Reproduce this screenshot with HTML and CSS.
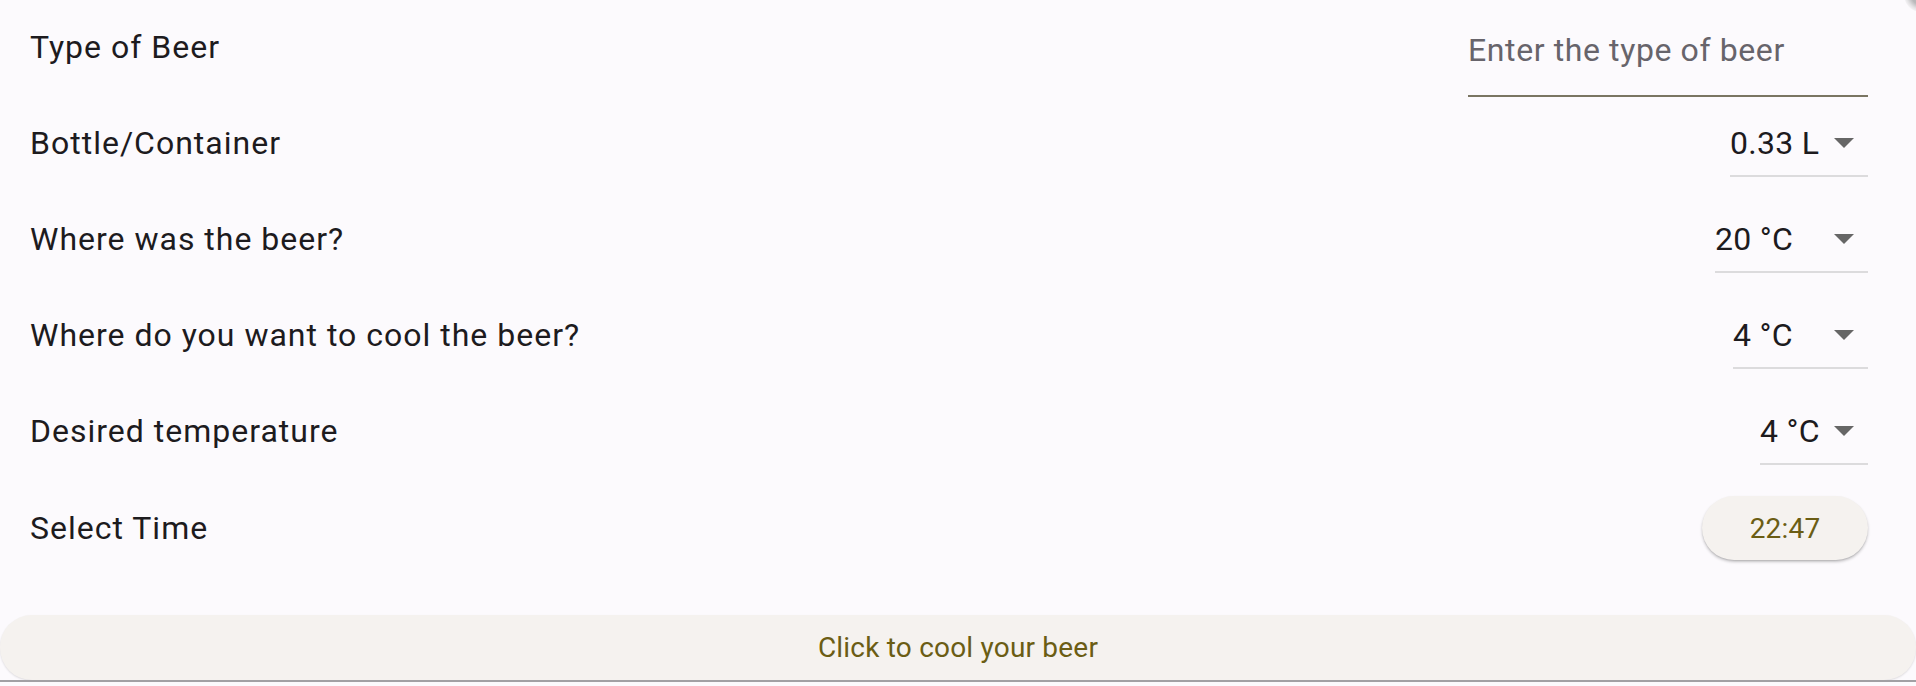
FILE: index.html
```html
<!DOCTYPE html>
<html lang="en">
<head>
<meta charset="utf-8">
<title>Cool your beer</title>
<link rel="stylesheet" href="styles.css">
</head>
<body>
<main class="page">
  <div class="row row-first">
    <span class="label label-first">Type of Beer</span>
    <div class="field"><span class="placeholder">Enter the type of beer</span></div>
  </div>

  <div class="row row-dd row-dd-first">
    <span class="label">Bottle/Container</span>
    <div class="dd dd-bottle">
      <span class="dd-value">0.33 L</span>
      <span class="dd-icon"><svg width="20" height="10" viewBox="0 0 20 10"><path d="M0 0H20L10 10Z" fill="#666666"/></svg></span>
    </div>
  </div>

  <div class="row row-dd">
    <span class="label">Where was the beer?</span>
    <div class="dd dd-where">
      <span class="dd-value">20 °C</span>
      <span class="dd-icon"><svg width="20" height="10" viewBox="0 0 20 10"><path d="M0 0H20L10 10Z" fill="#666666"/></svg></span>
    </div>
  </div>

  <div class="row row-dd">
    <span class="label">Where do you want to cool the beer?</span>
    <div class="dd dd-cool">
      <span class="dd-value">4 °C</span>
      <span class="dd-icon"><svg width="20" height="10" viewBox="0 0 20 10"><path d="M0 0H20L10 10Z" fill="#666666"/></svg></span>
    </div>
  </div>

  <div class="row row-dd">
    <span class="label">Desired temperature</span>
    <div class="dd dd-temp">
      <span class="dd-value">4 °C</span>
      <span class="dd-icon"><svg width="20" height="10" viewBox="0 0 20 10"><path d="M0 0H20L10 10Z" fill="#666666"/></svg></span>
    </div>
  </div>

  <div class="row row-time">
    <span class="label">Select Time</span>
    <button class="time-btn" type="button">22:47</button>
  </div>

  <button class="cta" type="button">Click to cool your beer</button>
  <div class="bottom-line"></div>
</main>
<div class="corner-shadow"></div>
</body>
</html>
```

FILE: styles.css
```css
html, body {
  margin: 0;
  padding: 0;
}

body {
  background: #fcfafd;
  font-family: Roboto, "Noto Sans", "Liberation Sans", sans-serif;
  color: #1d1b1e;
  width: 1916px;
  height: 686px;
  overflow: hidden;
  position: relative;
}

.page {
  display: flex;
  flex-direction: column;
}

.row {
  display: flex;
  justify-content: space-between;
  box-sizing: border-box;
  padding-left: 30px;
  padding-right: 48px;
}

.label {
  font-size: 32px;
  line-height: 40px;
  letter-spacing: 1px;
  color: #1d1b1e;
  white-space: nowrap;
}

.row-first {
  height: 97px;
  align-items: center;
}

.label-first {
  margin-bottom: 3px;
}

.field {
  width: 400px;
  height: 97px;
  box-sizing: border-box;
  padding-top: 30px;
  border-bottom: 2px solid #7a7562;
}

.placeholder {
  display: block;
  font-size: 32px;
  line-height: 40px;
  letter-spacing: 0.6px;
  color: #67646b;
}

.row-dd {
  height: 96px;
  padding-top: 30px;
  align-items: baseline;
}

.row-dd-first {
  height: 80px;
  padding-top: 14px;
}

.dd {
  display: flex;
  align-items: center;
  box-sizing: border-box;
  height: 66px;
  padding: 12px 0;
  border-bottom: 2px solid #dcdbdd;
}

.dd-value {
  flex: 1;
  font-size: 32px;
  line-height: 40px;
  letter-spacing: 0.3px;
  color: #1d1b1e;
  white-space: nowrap;
}

.dd-icon {
  width: 48px;
  height: 40px;
  display: flex;
  align-items: center;
  justify-content: center;
}

.dd-icon svg {
  display: block;
}

.dd-bottle { width: 138px; }
.dd-where { width: 153px; }
.dd-cool { width: 135px; }
.dd-temp { width: 108px; }

.row-time {
  align-items: center;
  padding-top: 31px;
  padding-bottom: 55px;
}

.time-btn {
  width: 166px;
  height: 64px;
  border: none;
  border-radius: 32px;
  background: #f5f2ef;
  color: #6b5d14;
  font-family: Roboto, "Noto Sans", "Liberation Sans", sans-serif;
  font-size: 28px;
  letter-spacing: 0.2px;
  padding: 0;
  box-shadow: 0 2px 3px rgba(0, 0, 0, 0.22), 0 1px 1px rgba(0, 0, 0, 0.08);
}

.cta {
  width: 100%;
  height: 65px;
  border: none;
  border-radius: 32px;
  background: #f5f2ef;
  color: #6b5d14;
  font-family: Roboto, "Noto Sans", "Liberation Sans", sans-serif;
  font-size: 28px;
  letter-spacing: 0.2px;
  padding: 0;
  box-shadow: 0 1px 2px rgba(0, 0, 0, 0.12);
}

.bottom-line {
  height: 2px;
  background: #a2a0a4;
}

.corner-shadow {
  position: absolute;
  top: -22px;
  right: -22px;
  width: 34px;
  height: 34px;
  border-radius: 50%;
  background: radial-gradient(circle, rgba(120, 120, 120, 0.5) 40%, rgba(160, 160, 160, 0.25) 60%, rgba(252, 250, 253, 0) 75%);
}
```
